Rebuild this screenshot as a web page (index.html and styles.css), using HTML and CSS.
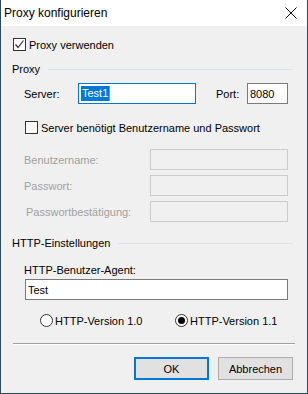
FILE: index.html
```html
<!DOCTYPE html>
<html lang="de">
<head>
    <meta charset="UTF-8">
    <title>Proxy konfigurieren</title>
    <link rel="stylesheet" href="styles.css">
</head>
<body>

    <div class="window">
        <div class="titlebar">
            <span class="title">Proxy konfigurieren</span>
            <svg class="close" width="12" height="12" viewBox="0 0 12 12">
                <path d="M0.5 0.5 L11.5 11.5 M11.5 0.5 L0.5 11.5" stroke="#000" stroke-width="1" fill="none"/>
            </svg>
        </div>

        <div class="content">
            <label class="check check-main">
                <span class="box">
                    <svg width="11" height="11" viewBox="0 0 11 11">
                        <path d="M1.5 5.5 L4 8.5 L9.5 1.5" stroke="#333" stroke-width="1.2" fill="none"/>
                    </svg>
                </span>
                Proxy verwenden
            </label>

            <div class="group group-proxy">
                <span class="group-title">Proxy</span>
                <span class="group-line"></span>
            </div>

            <div class="server-row">
                <span class="lbl lbl-server">Server:</span>
                <div class="field field-server"><span class="selected">Test1</span><span class="caret"></span></div>
                <span class="lbl lbl-port">Port:</span>
                <div class="field field-port">8080</div>
            </div>

            <label class="check check-auth">
                <span class="box"></span>
                Server benötigt Benutzername und Passwort
            </label>

            <div class="cred">
                <span class="lbl disabled">Benutzername:</span>
                <div class="field field-off"></div>
                <span class="lbl disabled">Passwort:</span>
                <div class="field field-off"></div>
                <span class="lbl disabled lbl-confirm">Passwortbestätigung:</span>
                <div class="field field-off"></div>
            </div>

            <div class="group group-http">
                <span class="group-title">HTTP-Einstellungen</span>
                <span class="group-line"></span>
            </div>

            <div class="agent-label">HTTP-Benutzer-Agent:</div>
            <div class="field field-agent">Test</div>

            <div class="radios">
                <label class="radio radio-10"><span class="dot"></span>HTTP-Version 1.0</label>
                <label class="radio radio-11"><span class="dot on"></span>HTTP-Version 1.1</label>
            </div>

            <div class="separator"></div>

            <div class="buttons">
                <button class="btn btn-ok">OK</button>
                <button class="btn">Abbrechen</button>
            </div>
        </div>
    </div>

</body>
</html>
```

FILE: styles.css
```css
body {
    margin: 0;
    padding: 0;
    font-family: "Liberation Sans", Arial, sans-serif;
    font-size: 11px;
    color: #000;
    background: #2e4a57;
}
.window {
    width: 308px;
    height: 394px;
    box-sizing: border-box;
    background: #f0f0f0;
    border: 1px solid #2e4a57;
    border-top: none;
    overflow: hidden;
}
.titlebar {
    height: 26px;
    background: #fff;
    display: flex;
    align-items: center;
    justify-content: space-between;
    padding: 0 10px 0 3px;
    font-size: 12px;
}
.close {
    display: block;
}
.content {
    display: flex;
    flex-direction: column;
}
.check {
    display: flex;
    align-items: center;
    height: 13px;
    gap: 3px;
}
.box {
    width: 13px;
    height: 13px;
    box-sizing: border-box;
    border: 1px solid #333;
    background: #fff;
    display: flex;
    align-items: center;
    justify-content: center;
}
.box svg {
    display: block;
}
.check-main {
    margin: 12px 0 0 12px;
}
.group {
    display: flex;
    align-items: center;
    height: 14px;
    margin-left: 11px;
    margin-right: 14px;
    gap: 8px;
}
.group-line {
    flex: 1;
    height: 1px;
    background: #dce3ea;
}
.group-proxy {
    margin-top: 11px;
}
.server-row {
    display: flex;
    align-items: center;
    margin: 7px 0 0 23px;
    height: 21px;
}
.lbl-server {
    width: 54px;
}
.lbl-port {
    margin-left: 20px;
    width: 31px;
}
.field {
    height: 21px;
    box-sizing: border-box;
    border: 1px solid #7a7a7a;
    background: #fff;
    display: flex;
    align-items: center;
    padding-left: 2px;
}
.field-server {
    width: 118px;
    border-color: #0078d7;
}
.selected {
    background: #0078d7;
    color: #fff;
    line-height: 15px;
    padding: 0 1px 0 1px;
}
.caret {
    width: 1px;
    height: 15px;
    background: #f07d00;
}
.field-port {
    width: 41px;
}
.check-auth {
    margin: 17px 0 0 24px;
}
.cred {
    display: grid;
    grid-template-columns: 126px 138px;
    grid-auto-rows: 21px;
    row-gap: 5px;
    align-items: center;
    margin: 15px 0 0 23px;
}
.disabled {
    color: #a0a0a0;
}
.lbl-confirm {
    padding-left: 2px;
}
.field-off {
    border-color: #cccccc;
    background: #f0f0f0;
}
.group-http {
    margin-top: 14px;
}
.agent-label {
    height: 14px;
    line-height: 14px;
    margin: 13px 0 0 23px;
}
.field-agent {
    margin: 2px 0 0 24px;
    width: 263px;
}
.radios {
    display: flex;
    height: 13px;
    margin: 14px 0 0 39px;
}
.radio {
    display: flex;
    align-items: center;
    gap: 2px;
}
.radio-10 {
    width: 135px;
}
.dot {
    width: 13px;
    height: 13px;
    box-sizing: border-box;
    border: 1px solid #333;
    border-radius: 50%;
    background: #fff;
    display: flex;
    align-items: center;
    justify-content: center;
}
.dot.on::after {
    content: "";
    width: 7px;
    height: 7px;
    border-radius: 50%;
    background: #000;
}
.separator {
    margin: 16px 12px 0 12px;
    height: 1px;
    background: #a0a0a0;
    border-bottom: 1px solid #fff;
}
.buttons {
    display: flex;
    justify-content: flex-end;
    gap: 9px;
    margin: 12px 14px 0 0;
}
.btn {
    width: 75px;
    height: 23px;
    box-sizing: border-box;
    background: #e1e1e1;
    border: 1px solid #adadad;
    font-family: inherit;
    font-size: 11px;
    color: #000;
    padding: 0;
}
.btn-ok {
    border: 2px solid #0078d7;
}
```
